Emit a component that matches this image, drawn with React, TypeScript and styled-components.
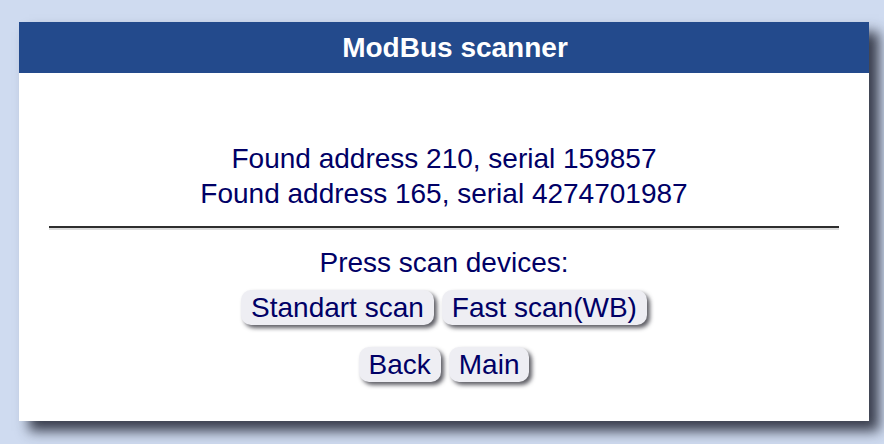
import React from "react";
import styled, { createGlobalStyle } from "styled-components";

const Global = createGlobalStyle`
  html, body { margin: 0; padding: 0; }
  body {
    background: #cfdbf0;
    font-family: "Liberation Sans", Arial, sans-serif;
    width: 884px;
    height: 444px;
    overflow: hidden;
  }
`;

const Page = styled.div`
  padding: 22px 15px 0 19px;
`;

const Panel = styled.div`
  width: 850px;
  background: #ffffff;
  box-shadow: 10px 10px 12px rgba(30, 34, 48, 0.85);
`;

const Header = styled.div`
  height: 51px;
  padding-left: 22px;
  background: #234a8c;
  color: #ffffff;
  font-weight: bold;
  font-size: 28px;
  display: flex;
  align-items: center;
  justify-content: center;
`;

const Body = styled.div`
  padding: 68px 0 39px;
  color: #000066;
  font-size: 28px;
  text-align: center;
`;

const Line = styled.div`
  line-height: 35px;
`;

const Rule = styled.hr`
  margin: 15px 30px 15px 30px;
  height: 0;
  border: none;
  border-top: 2px solid #2e2e2e;
  border-bottom: 2px solid #dcdcdc;
`;

const ButtonRow = styled.div<{ $top: number }>`
  display: flex;
  justify-content: center;
  gap: 8px;
  margin-top: ${(p) => p.$top}px;
`;

const Button = styled.button`
  height: 35px;
  padding: 0 10px;
  border: none;
  border-radius: 10px;
  background: #eeeef3;
  color: #000066;
  font-family: "Liberation Sans", Arial, sans-serif;
  font-size: 28px;
  line-height: 35px;
  box-shadow: 3px 3px 4px rgba(40, 40, 50, 0.75);
  cursor: pointer;
`;

export default function App() {
  return (
    <>
      <Global />
      <Page>
        <Panel>
          <Header>ModBus scanner</Header>
          <Body>
            <Line>Found address 210, serial 159857</Line>
            <Line>Found address 165, serial 4274701987</Line>
            <Rule />
            <Line>Press scan devices:</Line>
            <ButtonRow $top={10}>
              <Button>Standart scan</Button>
              <Button>Fast scan(WB)</Button>
            </ButtonRow>
            <ButtonRow $top={22}>
              <Button>Back</Button>
              <Button>Main</Button>
            </ButtonRow>
          </Body>
        </Panel>
      </Page>
    </>
  );
}
